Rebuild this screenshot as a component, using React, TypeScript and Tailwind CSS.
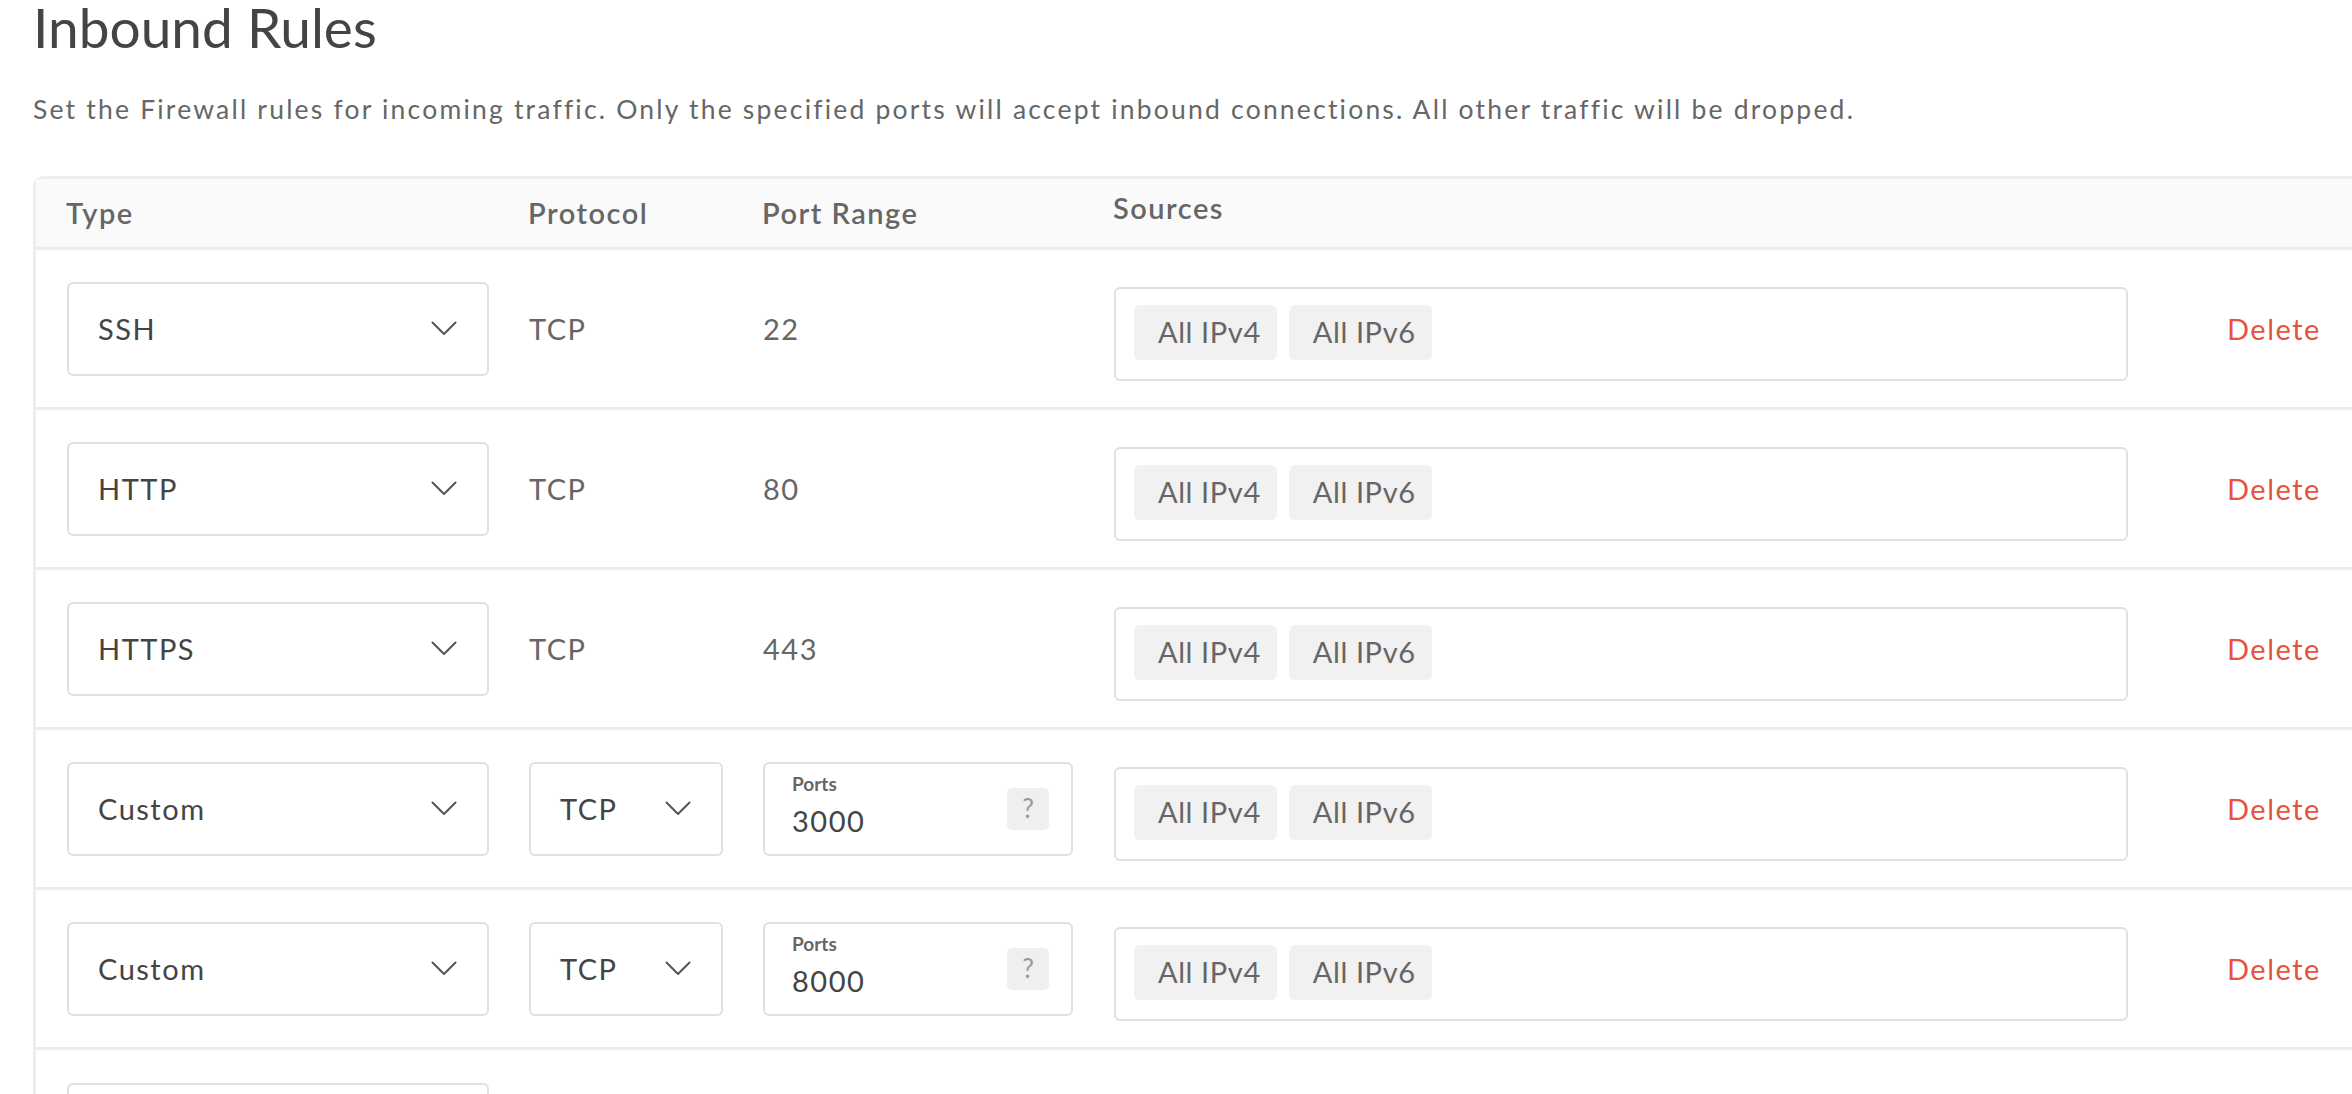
type Rule = {
  type: string;
  protocol: string;
  port: string;
  custom?: boolean;
};

const RULES: Rule[] = [
  { type: "SSH", protocol: "TCP", port: "22" },
  { type: "HTTP", protocol: "TCP", port: "80" },
  { type: "HTTPS", protocol: "TCP", port: "443" },
  { type: "Custom", protocol: "TCP", port: "3000", custom: true },
  { type: "Custom", protocol: "TCP", port: "8000", custom: true },
];

const Chevron = () => (
  <svg width="26" height="15" viewBox="0 0 26 15" fill="none" className="shrink-0">
    <polyline points="1.5,1.5 13,13 24.5,1.5" stroke="#555" strokeWidth="2" strokeLinecap="round" strokeLinejoin="round" />
  </svg>
);

const Select = ({ value, width }: { value: string; width: string }) => (
  <div className={`${width} h-[94px] flex items-center justify-between pl-[29px] pr-[30px] border-2 border-[#e0e0e0] rounded-[6px] bg-white text-[#444]`}>
    <span>{value}</span>
    <Chevron />
  </div>
);

const Chip = ({ label }: { label: string }) => (
  <span className="h-[55px] flex items-center pl-[24px] pr-[16px] bg-[#f1f1f1] rounded-[6px] text-[#666] tracking-[0.6px]">{label}</span>
);

const RuleRow = ({ rule }: { rule: Rule }) => (
  <div className="h-[160px] flex items-center border-b-[3px] border-[#ededed] pl-[31px]">
    <Select value={rule.type} width="w-[422px]" />

    {rule.custom ? (
      <div className="ml-[40px]">
        <Select value={rule.protocol} width="w-[194px]" />
      </div>
    ) : (
      <div className="ml-[40px] w-[194px] text-[#666]">{rule.protocol}</div>
    )}

    {rule.custom ? (
      <div className="ml-[40px] w-[310px] h-[94px] flex items-center justify-between pl-[27px] pr-[22px] border-2 border-[#e0e0e0] rounded-[6px]">
        <div className="flex flex-col self-start pt-[9px]">
          <span className="text-[19px] leading-[22px] tracking-normal font-bold text-[#666]">Ports</span>
          <span className="text-[#444] leading-[36px] mt-[8px]">{rule.port}</span>
        </div>
        <span className="w-[42px] h-[42px] flex items-center justify-center bg-[#efefef] rounded-[5px] text-[26px] tracking-normal text-[#999]">?</span>
      </div>
    ) : (
      <div className="ml-[40px] w-[310px] text-[#666]">{rule.port}</div>
    )}

    <div className="ml-[41px] w-[1014px] h-[94px] mt-[11px] flex items-center gap-[12px] pl-[18px] pb-[4px] border-2 border-[#e0e0e0] rounded-[6px]">
      <Chip label="All IPv4" />
      <Chip label="All IPv6" />
    </div>

    <button className="ml-[99px] text-[#e5533c]">Delete</button>
  </div>
);

export default function App() {
  return (
    <div className="min-h-screen bg-white pl-[33px] font-['Lato',sans-serif] text-[29px] tracking-[1.5px]">
      <h1 className="text-[55px] leading-[54px] tracking-normal text-[#444] font-normal">Inbound Rules</h1>

      <p className="mt-[38px] text-[26.5px] leading-[34px] tracking-[2.2px] text-[#666]">
        Set the Firewall rules for incoming traffic. Only the specified ports will accept inbound connections. All other traffic will be dropped.
      </p>

      <div className="mt-[50px] border-t-[3px] border-l-[3px] border-[#ededed] rounded-tl-[10px]">
        <div className="h-[71px] flex items-center bg-[#fafafa] border-b-[3px] border-[#ededed] pl-[30px] text-[29px] font-semibold text-[#666]">
          <span className="w-[462px]">Type</span>
          <span className="w-[234px]">Protocol</span>
          <span className="w-[351px]">Port Range</span>
          <span className="mb-[10px]">Sources</span>
        </div>

        {RULES.map((rule, i) => (
          <RuleRow key={i} rule={rule} />
        ))}

        {/* new rule row, only the type picker is shown */}
        <div className="h-[160px] flex items-center pl-[31px]">
          <Select value="New rule" width="w-[422px]" />
        </div>
      </div>
    </div>
  );
}
